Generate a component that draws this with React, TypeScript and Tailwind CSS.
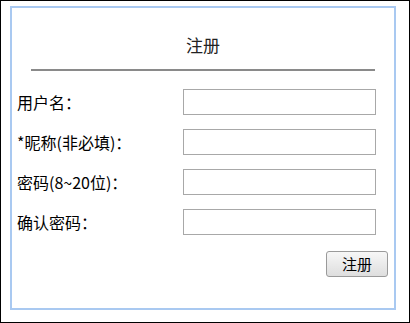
import React from 'react';

const fields = [
  { label: '用户名：', type: 'text' },
  { label: '*昵称(非必填)：', type: 'text' },
  { label: '密码(8~20位)：', type: 'password' },
  { label: '确认密码：', type: 'password' },
];

export default function App() {
  return (
    <div
      className="w-[410px] h-[323px] border border-black bg-white"
      style={{ fontFamily: '"Noto Sans CJK SC", "Liberation Sans", sans-serif' }}
    >
      <div className="ml-[9px] mt-[5px] w-[386px] h-[304px] border-2 border-[#a9c9f1] pt-[25px]">
        <h2 className="text-center text-[17px] leading-[24px] text-[#222]">注册</h2>
        <div className="mx-[19px] mt-[12px] border-t-2 border-[#8a8a8a]" />

        <form className="mt-[11px]" onSubmit={(e) => e.preventDefault()}>
          {fields.map((f) => (
            <div key={f.label} className="flex items-center h-[40px] pl-[5px] pr-[18px]">
              <label className="flex-1 text-[16px] leading-[20px] text-black">{f.label}</label>
              <input
                type={f.type}
                className="w-[193px] h-[26px] border border-[#a8a8a8] bg-white outline-none"
              />
            </div>
          ))}
          <div className="flex justify-end pr-[6px] mt-[9px]">
            <button
              type="submit"
              className="w-[62px] h-[26px] rounded-[3px] border border-[#9a9a9a] bg-gradient-to-b from-[#f7f7f7] to-[#dedede] text-[15px] leading-[20px] text-black"
            >
              注册
            </button>
          </div>
        </form>
      </div>
    </div>
  );
}
